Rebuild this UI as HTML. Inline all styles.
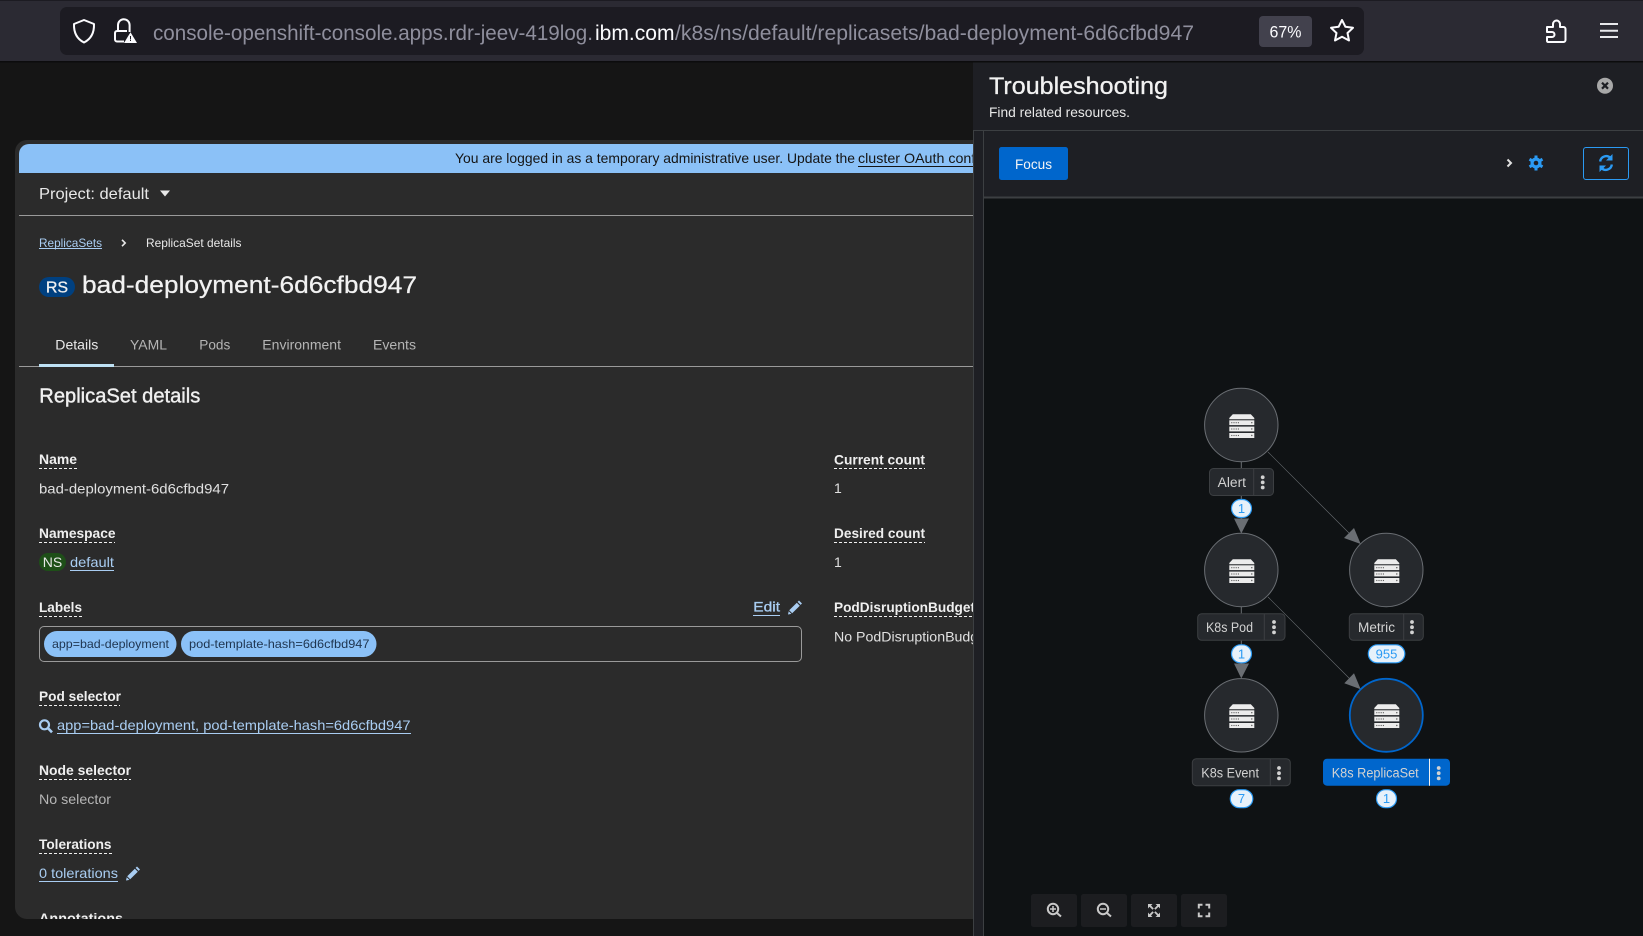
<!DOCTYPE html>
<html lang="en">
<head>
<meta charset="utf-8">
<title>bad-deployment-6d6cfbd947</title>
<style>
html,body{margin:0;padding:0;background:#151515;width:1643px;height:936px;overflow:hidden}
svg{display:block;position:absolute;left:0;top:0}
text{font-family:"Liberation Sans",sans-serif;white-space:pre}
.t{font-size:14px;fill:#e0e0e0}
.b{font-size:14px;font-weight:700;fill:#efefef}
.l{font-size:14px;fill:#a9cdf2}
.g{font-size:13.5px;fill:#d2d2d2}
.n{font-size:13px;fill:#2b9af3;text-anchor:middle}
.tab{font-size:14px;fill:#b5b5b5}
.u{stroke:#a9cdf2;stroke-width:1}
.d{stroke:#f0f0f0;stroke-width:1;stroke-dasharray:3 2}
.lb{fill:#26292d;stroke:#3c3f42;stroke-width:1}
.p{fill:#e7f1fa;stroke:#2b9af3;stroke-width:1.2}
.nd{fill:#26292d;stroke:#6a6e73;stroke-width:1}
.dv{stroke:#3c3f42;stroke-width:1}
.dot{fill:#d2d2d2}
.zb{fill:#1c1d20}
.zi{fill:none;stroke:#c9c9c9;stroke-width:2}
</style>
</head>
<body>
<svg width="1643" height="936" viewBox="0 0 1643 936" xmlns="http://www.w3.org/2000/svg">
<defs>
<g id="srv">
<path d="M-9 -10.700H9L12.500 -7V-5.800H-12.500V-7Z" fill="#ececec"/>
<rect x="-12.500" y="-4.700" width="25" height="4.800" fill="#ececec"/>
<rect x="-12.500" y="1.600" width="25" height="4.800" fill="#ececec"/>
<rect x="-12.500" y="8" width="25" height="5" fill="#ececec"/>
<g fill="#555">
<circle cx="-10" cy="-2.300" r=".6"/><circle cx="-7.800" cy="-2.300" r=".6"/><circle cx="-5.600" cy="-2.300" r=".6"/><circle cx="-3.400" cy="-2.300" r=".6"/><circle cx="10" cy="-2.300" r=".7"/>
<circle cx="-10" cy="4" r=".6"/><circle cx="-7.800" cy="4" r=".6"/><circle cx="-5.600" cy="4" r=".6"/><circle cx="-3.400" cy="4" r=".6"/><circle cx="10" cy="4" r=".7"/>
<circle cx="-10" cy="10.500" r=".6"/><circle cx="-7.800" cy="10.500" r=".6"/><circle cx="-5.600" cy="10.500" r=".6"/><circle cx="-3.400" cy="10.500" r=".6"/><circle cx="10" cy="10.500" r=".7"/>
</g>
</g>
<g id="pen">
<path d="M11 .5L14 3.500L12.600 4.900L9.600 1.900Z M8.800 2.700L11.800 5.700L4.200 13.300L1.200 10.300Z M.7 11.200L3.400 13.900L0 14.500Z" fill="#a9cdf2"/>
</g>
<clipPath id="cardclip"><path d="M15 152a12 12 0 0 1 12-12H973V919H27a12 12 0 0 1-12-12Z"/></clipPath>
</defs>

<!-- page background -->
<rect width="1643" height="936" fill="#151515"/>

<!-- browser chrome -->
<rect width="1643" height="61" fill="#2b2a33"/>
<rect width="1643" height="1" fill="#1c1b22"/>
<rect y="61" width="1643" height="1.500" fill="#0c0c0d"/>
<rect x="60" y="7" width="1304" height="48" rx="7" fill="#1c1b22"/>
<path d="M84 20L94 24C94.300 33 91 39 84 42.500C77 39 73.700 33 74 24Z" fill="none" stroke="#fbfbfe" stroke-width="2" stroke-linejoin="round"/>
<path d="M118 31V25a5.800 5.800 0 0 1 11.600 0V32M124 41.500H117a2 2 0 0 1-2-2V33a2 2 0 0 1 2-2H127" fill="none" stroke="#fbfbfe" stroke-width="2"/>
<path d="M130.500 32.300L137 43H124Z" fill="#fbfbfe"/>
<rect x="130" y="36" width="1" height="3.500" fill="#1c1b22"/><rect x="130" y="40" width="1" height="1" fill="#1c1b22"/>
<text x="153" y="40" font-size="21" fill="#8f8f9d" textLength="440" lengthAdjust="spacingAndGlyphs">console-openshift-console.apps.rdr-jeev-419log.</text>
<text x="595" y="40" font-size="21" fill="#fbfbfe" textLength="79.500" lengthAdjust="spacingAndGlyphs">ibm.com</text>
<text x="675" y="40" font-size="21" fill="#8f8f9d" textLength="519" lengthAdjust="spacingAndGlyphs">/k8s/ns/default/replicasets/bad-deployment-6d6cfbd947</text>
<rect x="1259" y="16" width="53" height="31" rx="4" fill="#42414d"/>
<text x="1269.500" y="37.500" font-size="17" fill="#fbfbfe" textLength="32" lengthAdjust="spacingAndGlyphs">67%</text>
<path d="M1342 20L1345.400 26.800L1353 27.800L1347.500 33L1349 40.500L1342 36.800L1335 40.500L1336.500 33L1331 27.800L1338.600 26.800Z" fill="none" stroke="#fbfbfe" stroke-width="2" stroke-linejoin="round"/>
<path d="M1548 42H1563.500a2 2 0 0 0 2-2V29a2 2 0 0 0-2-2H1560V25a3.800 3.800 0 0 0-3.500-4.500a3.800 3.800 0 0 0-3.500 3.500V27H1547V32H1552a2.500 2.500 0 0 1 0 5H1547V40.500a1.500 1.500 0 0 0 1 1.500Z" fill="none" stroke="#fbfbfe" stroke-width="2" stroke-linejoin="round"/>
<path d="M1600 24H1618M1600 30.700H1618M1600 37H1618" stroke="#e8e8ec" stroke-width="2"/>

<!-- main card -->
<path d="M15 152a12 12 0 0 1 12-12H973V919H27a12 12 0 0 1-12-12Z" fill="#2b2b2b"/>
<g clip-path="url(#cardclip)">
<path d="M19 173V154a10 10 0 0 1 10-10H973V173Z" fill="#8bc1f7"/>
<text x="455" y="163" font-size="14" fill="#151515" textLength="400" lengthAdjust="spacingAndGlyphs">You are logged in as a temporary administrative user. Update the</text>
<text x="858" y="163" font-size="14" fill="#151515" textLength="172" lengthAdjust="spacingAndGlyphs">cluster OAuth configuration</text>
<path d="M858 166.500H1000" stroke="#151515" stroke-width="1"/>

<text x="39" y="199" font-size="16" fill="#e8e8e8" textLength="110" lengthAdjust="spacingAndGlyphs">Project: default</text>
<path d="M160 190.500H170L165 196.500Z" fill="#e8e8e8"/>
<path d="M19 215.500H973" stroke="#9a9a9a" stroke-width="1"/>

<text x="39" y="247" font-size="12" fill="#a9cdf2" textLength="63" lengthAdjust="spacingAndGlyphs">ReplicaSets</text>
<path d="M39 248.500H102" class="u"/>
<path d="M122 239.800L125.200 243L122 246.200" fill="none" stroke="#e8e8e8" stroke-width="1.600"/>
<text x="146" y="247" font-size="12" fill="#e8e8e8" textLength="95.500" lengthAdjust="spacingAndGlyphs">ReplicaSet details</text>

<rect x="39" y="277" width="36" height="20" rx="10" fill="#004080"/>
<text x="57" y="292.500" font-size="16" fill="#f0f0f0" text-anchor="middle" stroke="#f0f0f0" stroke-width=".3">RS</text>
<text x="82" y="293" font-size="24" fill="#f2f2f2" stroke="#f2f2f2" stroke-width=".25" textLength="335" lengthAdjust="spacingAndGlyphs">bad-deployment-6d6cfbd947</text>

<text x="55.300" y="349.300" class="tab" style="fill:#e8e8e8" textLength="43" lengthAdjust="spacingAndGlyphs">Details</text>
<text x="130" y="349.300" class="tab" textLength="37" lengthAdjust="spacingAndGlyphs">YAML</text>
<text x="199.300" y="349.300" class="tab" textLength="31" lengthAdjust="spacingAndGlyphs">Pods</text>
<text x="262.300" y="349.300" class="tab" textLength="78.700" lengthAdjust="spacingAndGlyphs">Environment</text>
<text x="373" y="349.300" class="tab" textLength="43" lengthAdjust="spacingAndGlyphs">Events</text>
<path d="M19 366.500H973" stroke="#9a9a9a" stroke-width="1"/>
<rect x="39" y="364" width="75" height="3" fill="#bee1f4"/>

<text x="39.300" y="402.700" font-size="20" fill="#f0f0f0" stroke="#f0f0f0" stroke-width=".4" textLength="161" lengthAdjust="spacingAndGlyphs">ReplicaSet details</text>

<text x="39" y="464" class="b" textLength="38" lengthAdjust="spacingAndGlyphs">Name</text>
<path d="M39 468.500H78" class="d"/>
<text x="39" y="493.300" class="t" textLength="190" lengthAdjust="spacingAndGlyphs">bad-deployment-6d6cfbd947</text>

<text x="39" y="538" class="b" textLength="76.500" lengthAdjust="spacingAndGlyphs">Namespace</text>
<path d="M39 542.500H115" class="d"/>
<rect x="39" y="553" width="27" height="18" rx="9" fill="#1e4f18"/>
<text x="52.500" y="567" font-size="14" fill="#e8e8e8" text-anchor="middle">NS</text>
<text x="70" y="567" class="l" textLength="44" lengthAdjust="spacingAndGlyphs">default</text>
<path d="M70 570.500H114" class="u"/>

<text x="39" y="612" class="b" textLength="43" lengthAdjust="spacingAndGlyphs">Labels</text>
<path d="M39 616.500H82" class="d"/>
<text x="753.300" y="611.700" class="l" stroke="#a9cdf2" stroke-width=".3" textLength="26.700" lengthAdjust="spacingAndGlyphs">Edit</text>
<path d="M753 615.500H780" class="u"/>
<use href="#pen" x="788" y="600"/>
<rect x="39.500" y="626.500" width="762" height="35" rx="4.500" fill="none" stroke="#9a9a9a" stroke-width="1"/>
<rect x="44" y="631" width="132.500" height="26" rx="13" fill="#8bc1f7"/>
<text x="52" y="648" font-size="12" fill="#1f3550" textLength="117" lengthAdjust="spacingAndGlyphs">app=bad-deployment</text>
<rect x="181" y="631" width="195.500" height="26" rx="13" fill="#8bc1f7"/>
<text x="189" y="648" font-size="12" fill="#1f3550" textLength="180.500" lengthAdjust="spacingAndGlyphs">pod-template-hash=6d6cfbd947</text>

<text x="39" y="701" class="b" textLength="82" lengthAdjust="spacingAndGlyphs">Pod selector</text>
<path d="M39 705.500H120" class="d"/>
<circle cx="44.500" cy="724.800" r="4.500" fill="none" stroke="#a9cdf2" stroke-width="2.200"/>
<path d="M47.800 728L52 732.300" stroke="#a9cdf2" stroke-width="2.600"/>
<text x="57" y="730" class="l" textLength="353.500" lengthAdjust="spacingAndGlyphs">app=bad-deployment, pod-template-hash=6d6cfbd947</text>
<path d="M57 733.500H411" class="u"/>

<text x="39" y="775" class="b" textLength="92" lengthAdjust="spacingAndGlyphs">Node selector</text>
<path d="M39 779.500H131" class="d"/>
<text x="39" y="804" class="tab" textLength="72" lengthAdjust="spacingAndGlyphs">No selector</text>

<text x="39" y="849" class="b" textLength="72.500" lengthAdjust="spacingAndGlyphs">Tolerations</text>
<path d="M39 853.500H112" class="d"/>
<text x="39" y="878" class="l" textLength="79" lengthAdjust="spacingAndGlyphs">0 tolerations</text>
<path d="M39 881.500H118" class="u"/>
<use href="#pen" x="126" y="866"/>

<text x="39" y="923" class="b" textLength="84" lengthAdjust="spacingAndGlyphs">Annotations</text>

<text x="834" y="464.300" class="b" textLength="91" lengthAdjust="spacingAndGlyphs">Current count</text>
<path d="M834 468.500H925" class="d"/>
<text x="834" y="493" class="t">1</text>
<text x="834" y="538" class="b" textLength="91" lengthAdjust="spacingAndGlyphs">Desired count</text>
<path d="M834 542.500H925" class="d"/>
<text x="834" y="567" class="t">1</text>
<text x="834" y="612" class="b" textLength="141" lengthAdjust="spacingAndGlyphs">PodDisruptionBudget</text>
<path d="M834 616.500H973" class="d"/>
<text x="834" y="641.700" class="t" textLength="156" lengthAdjust="spacingAndGlyphs">No PodDisruptionBudget</text>
</g>

<!-- side panel -->
<rect x="973" y="62.500" width="670" height="873.500" fill="#1e1f24"/>
<path d="M973.500 130V936" stroke="#3c3f42" stroke-width="1"/>
<path d="M973 130.500H1643" stroke="#3c3f42" stroke-width="1"/>
<text x="989" y="94" font-size="24" fill="#f2f2f2" stroke="#f2f2f2" stroke-width=".3" textLength="179" lengthAdjust="spacingAndGlyphs">Troubleshooting</text>
<text x="989" y="117" font-size="14" fill="#e8e8e8" textLength="141" lengthAdjust="spacingAndGlyphs">Find related resources.</text>
<circle cx="1605" cy="85.700" r="8" fill="#a8a8a8"/>
<path d="M1602 82.700L1608 88.700M1608 82.700L1602 88.700" stroke="#1e1f24" stroke-width="2.200"/>

<rect x="983" y="131" width="660" height="805" fill="#1e1f24"/>
<path d="M983.500 131V936" stroke="#3c3f42" stroke-width="1"/>
<rect x="999" y="147" width="69" height="33" rx="2.500" fill="#0066cc"/>
<text x="1015" y="169" font-size="14" fill="#f5f5f5" textLength="37" lengthAdjust="spacingAndGlyphs">Focus</text>
<path d="M1507.500 159.500L1511 163L1507.500 166.500" fill="none" stroke="#e0e0e0" stroke-width="2"/>
<g fill="#2b9af3" stroke="#2b9af3">
<circle cx="1536" cy="163" r="5" stroke-width="1"/>
<path d="M1536 155.500V170.500M1529.500 159.200L1542.500 166.800M1542.500 159.200L1529.500 166.800" stroke-width="3"/>
</g>
<circle cx="1536" cy="163" r="2.300" fill="#1e1f24"/>
<rect x="1583.500" y="147.500" width="45" height="32" rx="2.500" fill="none" stroke="#2b9af3" stroke-width="1"/>
<g fill="none" stroke="#2b9af3" stroke-width="2.400">
<path d="M1600.200 161.500A6 6 0 0 1 1610.500 158"/>
<path d="M1611.800 164.500A6 6 0 0 1 1601.500 168"/>
</g>
<path d="M1612.500 154V160.500H1606Z M1599.500 172V165.500H1606Z" fill="#2b9af3"/>
<rect x="984" y="196.500" width="659" height="2" fill="#3c3f42"/>

<!-- graph -->
<rect x="984" y="198.500" width="659" height="737.500" fill="#0f1214"/>

<g stroke="#6a6e73" fill="none">
<path d="M1241.300 462V520" stroke-width="1"/>
<path d="M1241.300 607V665" stroke-width="1"/>
<path d="M1268 452L1352 536" stroke-width=".6"/>
<path d="M1268 597L1352 681" stroke-width=".6"/>
</g>
<g fill="#6a6e73">
<path d="M1234 518.500H1249L1241.300 533.500Z"/>
<path d="M1234 663.500H1249L1241.300 678.500Z"/>
<path d="M1360.700 544L1344 538L1354 528Z"/>
<path d="M1360.700 689.300L1344.300 683.300L1354 673.300Z"/>
</g>

<circle cx="1241.300" cy="425" r="36.700" class="nd"/>
<use href="#srv" x="1241.800" y="425"/>
<circle cx="1241.300" cy="570" r="36.700" class="nd"/>
<use href="#srv" x="1241.800" y="570"/>
<circle cx="1386.300" cy="570" r="36.700" class="nd"/>
<use href="#srv" x="1386.800" y="570"/>
<circle cx="1241.300" cy="715.300" r="36.700" class="nd"/>
<use href="#srv" x="1241.800" y="715"/>
<circle cx="1386.300" cy="715.300" r="36.500" fill="#26292d" stroke="#0066cc" stroke-width="1.800"/>
<use href="#srv" x="1386.800" y="715"/>

<!-- Alert label -->
<rect x="1209.500" y="468.500" width="64" height="27" rx="4" class="lb"/>
<path d="M1253.700 468.500V495.500" class="dv"/>
<text x="1217.700" y="487" class="g" textLength="28.300" lengthAdjust="spacingAndGlyphs">Alert</text>
<circle cx="1262.700" cy="477.300" r="1.900" class="dot"/><circle cx="1262.700" cy="482.400" r="1.900" class="dot"/><circle cx="1262.700" cy="487.500" r="1.900" class="dot"/>

<!-- K8s Pod label -->
<rect x="1197.700" y="613.700" width="87.300" height="26.600" rx="4" class="lb"/>
<path d="M1264.300 613.700V640.300" class="dv"/>
<text x="1206" y="632" class="g" textLength="47" lengthAdjust="spacingAndGlyphs">K8s Pod</text>
<circle cx="1274" cy="622" r="1.900" class="dot"/><circle cx="1274" cy="627.200" r="1.900" class="dot"/><circle cx="1274" cy="632.400" r="1.900" class="dot"/>

<!-- Metric label -->
<rect x="1349.300" y="613.700" width="74" height="26.600" rx="4" class="lb"/>
<path d="M1403.700 613.700V640.300" class="dv"/>
<text x="1358" y="632" class="g" textLength="37" lengthAdjust="spacingAndGlyphs">Metric</text>
<circle cx="1412" cy="622" r="1.900" class="dot"/><circle cx="1412" cy="627.200" r="1.900" class="dot"/><circle cx="1412" cy="632.400" r="1.900" class="dot"/>

<!-- K8s Event label -->
<rect x="1192.300" y="758.700" width="98" height="27" rx="4" class="lb"/>
<path d="M1270.300 758.700V785.700" class="dv"/>
<text x="1201.300" y="777.300" class="g" textLength="57.700" lengthAdjust="spacingAndGlyphs">K8s Event</text>
<circle cx="1279" cy="768" r="1.900" class="dot"/><circle cx="1279" cy="773.200" r="1.900" class="dot"/><circle cx="1279" cy="778.400" r="1.900" class="dot"/>

<!-- K8s ReplicaSet label -->
<rect x="1323" y="758.700" width="127" height="27" rx="4" fill="#0066cc"/>
<path d="M1429.500 758.700V785.700" stroke="#f0f0f0" stroke-width="1"/>
<text x="1331.700" y="777.300" class="g" textLength="87" lengthAdjust="spacingAndGlyphs">K8s ReplicaSet</text>
<circle cx="1438.700" cy="768" r="1.900" class="dot"/><circle cx="1438.700" cy="773.200" r="1.900" class="dot"/><circle cx="1438.700" cy="778.400" r="1.900" class="dot"/>

<!-- count pills -->
<rect x="1231.500" y="499.500" width="20" height="18" rx="9" class="p"/>
<text x="1241.500" y="513" class="n">1</text>
<rect x="1231.500" y="644.800" width="20" height="18" rx="9" class="p"/>
<text x="1241.500" y="658.300" class="n">1</text>
<rect x="1368.300" y="644.800" width="36.500" height="18" rx="9" class="p"/>
<text x="1386.500" y="658.300" class="n">955</text>
<rect x="1230.300" y="789.700" width="22.500" height="18" rx="9" class="p"/>
<text x="1241.500" y="803.200" class="n">7</text>
<rect x="1376.500" y="789.700" width="20" height="18" rx="9" class="p"/>
<text x="1386.500" y="803.200" class="n">1</text>

<!-- zoom controls -->
<rect x="1031" y="894" width="46" height="33" rx="2.500" class="zb"/>
<rect x="1081" y="894" width="46" height="33" rx="2.500" class="zb"/>
<rect x="1131" y="894" width="46" height="33" rx="2.500" class="zb"/>
<rect x="1181" y="894" width="46" height="33" rx="2.500" class="zb"/>
<circle cx="1053" cy="909" r="5.200" class="zi"/>
<path d="M1057 913L1061 916.500" class="zi" stroke-width="2.400"/>
<path d="M1050 909H1056M1053 906V912" stroke="#c9c9c9" stroke-width="1.500"/>
<circle cx="1103" cy="909" r="5.200" class="zi"/>
<path d="M1107 913L1111 916.500" class="zi" stroke-width="2.400"/>
<path d="M1100 909H1106" stroke="#c9c9c9" stroke-width="1.500"/>
<path d="M1148 904H1152.500L1151 905.500L1153.800 908.500L1152.500 909.800L1149.500 906.800L1148 908.500Z M1160 904V908.500L1158.500 906.800L1155.500 909.800L1154.200 908.500L1157.200 905.500L1155.500 904Z M1148 917V912.500L1149.500 914.200L1152.500 911.200L1153.800 912.500L1151 915.500L1152.500 917Z M1160 917H1155.500L1157.200 915.500L1154.200 912.500L1155.500 911.200L1158.500 914.200L1160 912.500Z" fill="#c9c9c9"/>
<path d="M1198.800 908.500V904.800H1202.500M1205.500 904.800H1209.200V908.500M1209.200 912.500V916.200H1205.500M1202.500 916.200H1198.800V912.500" fill="none" stroke="#c9c9c9" stroke-width="2"/>
</svg>
</body>
</html>
